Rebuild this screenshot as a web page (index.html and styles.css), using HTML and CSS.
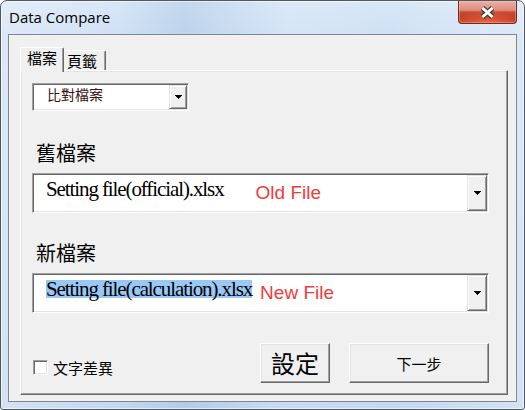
FILE: index.html
```html
<!DOCTYPE html>
<html lang="zh-Hant">
<head>
<meta charset="utf-8">
<title>Data Compare</title>
<link rel="stylesheet" href="styles.css">
</head>
<body>
<div class="window">
  <div class="titlebar">
    <span class="title">Data Compare</span>
    <div class="close">
      <svg width="17" height="15" viewBox="0 0 17 15">
        <path d="M3.5 3 L13.5 12 M13.5 3 L3.5 12" stroke="#3a3a3a" stroke-width="5.2" fill="none"/>
        <path d="M3.5 3 L13.5 12 M13.5 3 L3.5 12" stroke="#ffffff" stroke-width="3" fill="none"/>
      </svg>
    </div>
  </div>
  <div class="client">
    <div class="tabs">
      <div class="tab active">檔案</div>
      <div class="tab other">頁籤</div>
    </div>
    <div class="panel">
      <div class="sel small">
        <span class="val-small">比對檔案</span>
        <span class="arrowbtn">
          <svg width="7" height="4" viewBox="0 0 7 4"><path d="M0 0h7v1h-1v1h-1v1h-1v1h-1v-1h-1v-1h-1v-1h-1z" fill="#000"/></svg>
        </span>
      </div>
      <div class="label first">舊檔案</div>
      <div class="sel big">
        <span class="val-big">Setting file(official).xlsx</span>
        <span class="note old">Old File</span>
        <span class="arrowbtn wide">
          <svg width="7" height="4" viewBox="0 0 7 4"><path d="M0 0h7v1h-1v1h-1v1h-1v1h-1v-1h-1v-1h-1v-1h-1z" fill="#000"/></svg>
        </span>
      </div>
      <div class="label">新檔案</div>
      <div class="sel big">
        <span class="val-big hl">Setting file(calculation).xlsx</span>
        <span class="note new">New File</span>
        <span class="arrowbtn wide">
          <svg width="7" height="4" viewBox="0 0 7 4"><path d="M0 0h7v1h-1v1h-1v1h-1v1h-1v-1h-1v-1h-1v-1h-1z" fill="#000"/></svg>
        </span>
      </div>
      <div class="footer">
        <div class="check"><span class="box"></span><span>文字差異</span></div>
        <div class="btn set">設定</div>
        <div class="btn next">下一步</div>
      </div>
    </div>
  </div>
</div>
</body>
</html>
```
FILE: styles.css
```css
html, body {
  margin: 0;
  padding: 0;
  background: #ffffff;
}

.window {
  width: 525px;
  height: 410px;
  box-sizing: border-box;
  border: 1px solid #4f5964;
  border-radius: 7px 7px 3px 3px;
  background:
    linear-gradient(90deg, rgba(255,255,255,0.35) 0%, rgba(255,255,255,0.1) 22%, rgba(150,180,215,0.25) 35%, rgba(255,255,255,0.2) 55%, rgba(255,255,255,0.1) 75%, rgba(255,255,255,0.35) 100%),
    linear-gradient(180deg, #d3e4f6 0%, #c9dcf2 40px, #bdd4ee 100%);
  box-shadow: inset 0 0 0 1px rgba(255,255,255,0.55);
  display: flex;
  flex-direction: column;
  overflow: hidden;
  font-family: "Noto Sans CJK TC", "Noto Sans CJK SC", sans-serif;
  color: #000;
}

.titlebar {
  flex: none;
  height: 33px;
  display: flex;
  justify-content: space-between;
  align-items: flex-start;
}

.title {
  font-family: "Open Sans", "Noto Sans", sans-serif;
  font-size: 15px;
  line-height: 20px;
  margin: 6px 0 0 8px;
  color: #000;
}

.close {
  width: 59px;
  height: 23px;
  box-sizing: border-box;
  margin-right: 7px;
  border: 1px solid #6d2b22;
  border-top: none;
  border-radius: 0 0 4px 4px;
  background:
    radial-gradient(ellipse 60% 55% at 50% 100%, rgba(255,120,80,0.65), rgba(255,120,80,0) 100%),
    linear-gradient(180deg, #eab0a4 0%, #df8c7c 42%, #c94a32 50%, #c13a23 80%, #c8452c 100%);
  box-shadow: inset 0 0 0 1px rgba(255,210,200,0.35);
  display: flex;
  align-items: center;
  justify-content: center;
}

.client {
  flex: none;
  height: 368px;
  margin: 0 7px;
  box-sizing: border-box;
  border: 1px solid #7d8894;
  background: #f0f0f0;
  padding: 12px 8px 0 11px;
}

.tabs {
  display: flex;
  align-items: flex-end;
  height: 23px;
}

.tab {
  box-sizing: border-box;
  font-size: 15px;
  line-height: 15px;
  background: #f0f0f0;
  border-top: 1px solid #ffffff;
  border-left: 1px solid #ffffff;
  border-right: 1px solid #696969;
  box-shadow: inset -1px 0 #a0a0a0;
  border-radius: 2px 2px 0 0;
  padding-top: 2px;
  white-space: nowrap;
}

.tab.active {
  width: 44px;
  height: 25px;
  margin-bottom: -2px;
  padding-left: 6px;
  position: relative;
  z-index: 1;
}

.tab.other {
  width: 42px;
  height: 20px;
  padding-left: 3px;
  border-left: none;
}

.panel {
  width: 488px;
  height: 325px;
  box-sizing: border-box;
  border: 1px solid;
  border-color: #ffffff #696969 #696969 #ffffff;
  box-shadow: inset -1px -1px #a0a0a0, inset 1px 1px #e3e3e3;
  background: #f0f0f0;
  padding: 12px 0 0 11px;
  display: flex;
  flex-direction: column;
  align-items: flex-start;
}

.sel {
  box-sizing: border-box;
  border: 1px solid;
  border-color: #a0a0a0 #ffffff #ffffff #a0a0a0;
  box-shadow: inset 1px 1px #696969, inset -1px -1px #e3e3e3;
  background: #ffffff;
  padding: 1px;
  display: flex;
  align-items: flex-start;
}

.sel.small {
  width: 157px;
  height: 28px;
}

.sel.big {
  width: 457px;
  height: 40px;
  margin-top: 10px;
}

.val-small {
  font-size: 14px;
  line-height: 14px;
  margin: 2px 0 0 13px;
  color: #3c1212;
  white-space: nowrap;
}

.arrowbtn {
  box-sizing: border-box;
  width: 18px;
  height: 100%;
  margin-left: auto;
  background: #f0f0f0;
  border: 1px solid;
  border-color: #e3e3e3 #696969 #696969 #e3e3e3;
  box-shadow: inset 1px 1px #ffffff, inset -1px -1px #a0a0a0;
  display: flex;
  align-items: center;
  justify-content: center;
}

.arrowbtn.wide {
  width: 20px;
}

.arrowbtn svg {
  display: block;
}

.val-big {
  font-family: "Liberation Serif", "Times New Roman", serif;
  font-size: 21px;
  letter-spacing: -1.1px;
  line-height: 18px;
  height: 18px;
  margin: 5px 0 0 12px;
  white-space: nowrap;
  color: #000;
}

.hl {
  background: #99c8f7;
}

.note {
  font-family: "Liberation Sans", Arial, sans-serif;
  font-size: 19px;
  line-height: 19px;
  color: #f23b3b;
  margin-top: 8px;
  white-space: nowrap;
}

.note.old {
  margin-left: 32px;
}

.note.new {
  margin-left: 8px;
}

.label {
  font-size: 20px;
  line-height: 20px;
  margin: 30px 0 0 4px;
}

.label.first {
  margin-top: 32px;
}

.footer {
  width: 457px;
  margin-top: 30px;
  display: flex;
  align-items: flex-end;
}

.check {
  display: flex;
  align-items: center;
  font-size: 15px;
  line-height: 15px;
  margin: 0 auto 8px 1px;
}

.box {
  width: 15px;
  height: 15px;
  box-sizing: border-box;
  border: 1px solid;
  border-color: #a0a0a0 #ffffff #ffffff #a0a0a0;
  box-shadow: inset 1px 1px #696969, inset -1px -1px #e3e3e3;
  background: #ffffff;
  margin-right: 5px;
}

.btn {
  height: 40px;
  box-sizing: border-box;
  background: #f0f0f0;
  border: 1px solid;
  border-color: #ffffff #696969 #696969 #ffffff;
  box-shadow: inset -1px -1px #a0a0a0, inset 1px 1px #e3e3e3;
  display: flex;
  align-items: center;
  justify-content: center;
  line-height: 1;
  white-space: nowrap;
}

.btn.set {
  width: 70px;
  font-size: 24px;
  margin-right: 19px;
}

.btn.next {
  width: 140px;
  font-size: 15px;
}
```
